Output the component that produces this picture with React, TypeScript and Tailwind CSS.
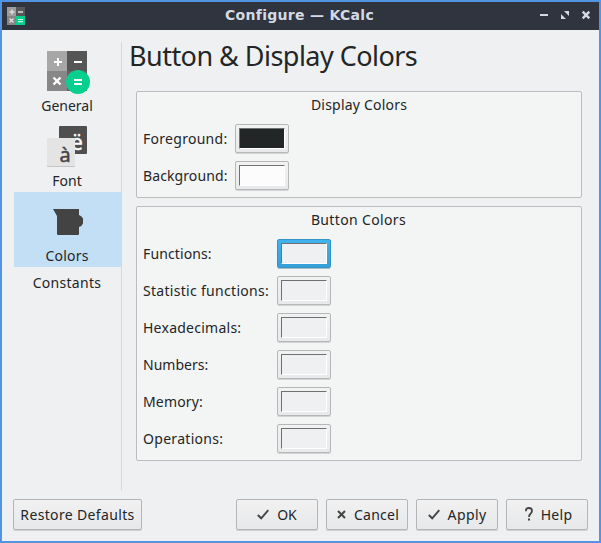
import React from "react";

const BODY = "font-['Noto_Sans','Open_Sans',sans-serif]";

function CalcIcon() {
  return (
    <svg viewBox="0 0 43 43" className="block h-[43px] w-[43px]">
      <rect x="0" y="0" width="20" height="20" fill="#a7a7a7" />
      <rect x="20" y="0" width="20" height="20" fill="#565656" />
      <rect x="0" y="20" width="20" height="20" fill="#878787" />
      <rect x="20" y="20" width="20" height="20" fill="#636363" />
      <path d="M7 11h8M11 7v8M27 11h8" stroke="#fff" strokeWidth="2" />
      <path d="M6.5 26.5l7 7M13.5 26.5l-7 7" stroke="#fff" strokeWidth="2.3" />
      <circle cx="31" cy="31" r="12" fill="#06d08d" />
      <path d="M27 29h8M27 33h8" stroke="#fff" strokeWidth="2" />
    </svg>
  );
}

function TitleIcon() {
  return (
    <svg viewBox="0 0 18 18" className="block h-[18px] w-[18px]" shapeRendering="crispEdges">
      <rect width="9" height="9" fill="#9c9c9c" />
      <rect x="9" width="9" height="9" fill="#575757" />
      <rect y="9" width="9" height="9" fill="#858585" />
      <rect x="9" y="9" width="9" height="9" fill="#06d08d" />
      <path d="M2.5 5h5M5 2.5v5M11 5h5" stroke="#dedede" strokeWidth="1.4" shapeRendering="auto" />
      <path d="M2.5 11.5l4 4M6.5 11.5l-4 4" stroke="#dedede" strokeWidth="1.4" shapeRendering="auto" />
      <path d="M11 12.5h5M11 14.7h5" stroke="#c9f5e5" strokeWidth="1.2" shapeRendering="auto" />
    </svg>
  );
}

function FontIcon() {
  return (
    <svg viewBox="0 0 40 41" className="block h-[41px] w-[40px]" fontFamily="'Noto Sans', sans-serif">
      <rect x="12" y="0" width="28" height="28" rx="1" fill="#4f4f4f" />
      <text x="24" y="24" fontSize="21" fill="#fff" stroke="#fff" strokeWidth="0.4">ë</text>
      <rect x="0" y="12.5" width="28" height="28.5" rx="1" fill="#c4c4c4" />
      <rect x="0" y="12" width="28" height="28" rx="1" fill="#e4e4e4" />
      <text x="12.5" y="36" fontSize="20" fill="#454545" stroke="#454545" strokeWidth="0.5">à</text>
    </svg>
  );
}

function ColorsIcon() {
  return (
    <svg viewBox="0 0 30 26" className="block h-[26px] w-[30px]">
      <path d="M0 0H26V6A6.3 6.3 0 0 1 26 18V25Q26 26 25 26H5Q4 26 4 25V7Z" fill="#434343" />
    </svg>
  );
}

function Swatch({ color, focused = false }: { color: string; focused?: boolean }) {
  return (
    <button
      className={
        "h-[29px] w-[54px] rounded-[2px] border p-[3px] " +
        (focused
          ? "border-[#3494c6] bg-linear-to-b from-[#40b3ee] to-[#36a0d8] shadow-[0_1px_0_#a9bfca]"
          : "border-[#b5b7b8] bg-linear-to-b from-[#f2f2f3] to-[#e8e9ea] shadow-[0_1px_0_#d3d4d5]")
      }
    >
      <span
        className={
          "block h-[21px] w-[46px] border-t border-r border-b border-l border-t-[#6f7073] border-r-white border-b-white border-l-[#6f7073] " +
          color
        }
      />
    </button>
  );
}

function Row({ label, track, width, color, focused }: { label: string; track: string; width: string; color: string; focused?: boolean }) {
  return (
    <div className="flex h-[29px] items-center">
      <span className={"whitespace-nowrap " + width + " " + track}>{label}</span>
      <Swatch color={color} focused={focused} />
    </div>
  );
}

function ActionButton({ children, wide = false }: { children: React.ReactNode; wide?: boolean }) {
  return (
    <button
      className={
        "flex h-[31px] items-center justify-center whitespace-nowrap rounded-[2px] border border-[#b4b5b7] bg-linear-to-b from-[#f1f1f2] to-[#e7e8e9] shadow-[0_1px_0_#cfd0d1] " +
        (wide ? "w-[129px]" : "w-[82px]")
      }
    >
      {children}
    </button>
  );
}

function Check() {
  return (
    <svg viewBox="0 0 12 11" className="h-[11px] w-[12px]">
      <path d="M0.8 6L4.2 9.3L11.3 1.2" fill="none" stroke="#454545" strokeWidth="1.9" />
    </svg>
  );
}

const buttonRows = [
  { label: "Functions:", track: "tracking-[0.12px]", focused: true },
  { label: "Statistic functions:", track: "tracking-[0.3px]" },
  { label: "Hexadecimals:", track: "tracking-[0.25px]" },
  { label: "Numbers:", track: "tracking-[0px]" },
  { label: "Memory:", track: "tracking-[0.15px]" },
  { label: "Operations:", track: "tracking-[0.3px]" },
];

export default function App() {
  return (
    <div className={"flex h-[543px] w-[601px] flex-col border-2 border-[#5294e2] bg-[#eff0f1] text-[14px] leading-[20px] text-[#232627] " + BODY}>
      <header className="flex h-[28px] shrink-0 items-center bg-[#2f343f] pr-[9px] pl-[5px]">
        <TitleIcon />
        <h1 className="mb-[2px] flex-1 pl-[34px] text-center font-['DejaVu_Sans'] text-[14px] leading-[26px] font-bold tracking-[0.3px] whitespace-nowrap text-[#d3dae3]">
          Configure — KCalc
        </h1>
        <svg viewBox="0 0 50 10" className="mb-[2px] h-[10px] w-[50px]" fill="#d3dae3">
          <rect x="0" y="4" width="8" height="2" />
          <path d="M24 1H29V6ZM21 4V9H26Z" />
          <path d="M42.7 1.7l6.6 6.6M49.3 1.7l-6.6 6.6" stroke="#d3dae3" strokeWidth="2.4" />
        </svg>
      </header>

      <div className="flex h-[460px] shrink-0 pl-[12px]">
        <nav className="flex h-[460px] w-[108px] shrink-0 flex-col bg-[linear-gradient(#c8dcea,#c8dcea)] bg-[length:1px_448px] bg-[position:right_12px] bg-no-repeat pt-[12px]">
          <div className="flex h-[75px] flex-col items-center pt-[9px]">
            <CalcIcon />
            <span className="mt-[2px] -ml-[2px]">General</span>
          </div>
          <div className="flex h-[75px] flex-col items-center pt-[9px] pr-[2px]">
            <FontIcon />
            <span className="mt-[4px]">Font</span>
          </div>
          <div className="flex h-[75px] flex-col items-center bg-[#c2dff5] pt-[17px] pr-[2px]">
            <div className="pl-[2px]">
              <ColorsIcon />
            </div>
            <span className="mt-[11px] tracking-[0.2px]">Colors</span>
          </div>
          <div className="flex h-[32px] items-center justify-center pr-[2px] tracking-[0.3px]">Constants</div>
        </nav>

        <main className="flex flex-col pt-[10px] pl-[7px]">
          <h2 className="h-[51px] text-[27px] leading-[32px] tracking-[-0.53px] whitespace-nowrap">Button &amp; Display Colors</h2>
          <section className="ml-[7px] flex h-[107px] w-[446px] flex-col rounded-[2px] border border-[#bbbdbe] bg-[#f3f4f4] pt-[3px] pl-[6px]">
            <h3 className="h-[29px] pr-[6px] text-center tracking-[0.2px]">Display Colors</h3>
            <div className="flex flex-col gap-[8px]">
              <Row label="Foreground:" track="tracking-[0.28px]" width="w-[92px]" color="bg-[#232627]" />
              <Row label="Background:" track="tracking-[0.1px]" width="w-[92px]" color="bg-[#fcfcfc]" />
            </div>
          </section>
          <section className="mt-[8px] ml-[7px] flex h-[255px] w-[446px] flex-col rounded-[2px] border border-[#bbbdbe] bg-[#f3f4f4] pt-[3px] pl-[6px]">
            <h3 className="h-[29px] pr-[7px] text-center tracking-[0.36px]">Button Colors</h3>
            <div className="flex flex-col gap-[8px]">
              {buttonRows.map((row) => (
                <Row key={row.label} {...row} width="w-[134px]" color="bg-[#eff0f1]" />
              ))}
            </div>
          </section>
        </main>
      </div>

      <footer className="flex pt-[9px] pl-[11px]">
        <ActionButton wide>
          <span className="tracking-[0.35px]">Restore Defaults</span>
        </ActionButton>
        <div className="ml-[94px] flex gap-[8px]">
          <ActionButton>
            <Check />
            <span className="ml-[8px]">OK</span>
          </ActionButton>
          <ActionButton>
            <svg viewBox="0 0 9 9" className="ml-[2px] h-[9px] w-[9px]">
              <path d="M1 1L8 8M8 1L1 8" stroke="#454545" strokeWidth="2" />
            </svg>
            <span className="ml-[8px] tracking-[0.25px]">Cancel</span>
          </ActionButton>
          <ActionButton>
            <Check />
            <span className="ml-[8px] tracking-[0.4px]">Apply</span>
          </ActionButton>
          <ActionButton>
            <svg viewBox="0 0 8 14" className="mb-[2px] ml-[3px] h-[14px] w-[8px]">
              <path d="M1 4.2V3Q1 1 4 1Q7 1 7 3.8Q7 5.5 5.5 6.7Q4 8 4 10" fill="none" stroke="#454545" strokeWidth="1.8" />
              <rect x="3" y="11.5" width="2" height="2" fill="#454545" />
            </svg>
            <span className="ml-[8px] tracking-[0.3px]">Help</span>
          </ActionButton>
        </div>
      </footer>
    </div>
  );
}
